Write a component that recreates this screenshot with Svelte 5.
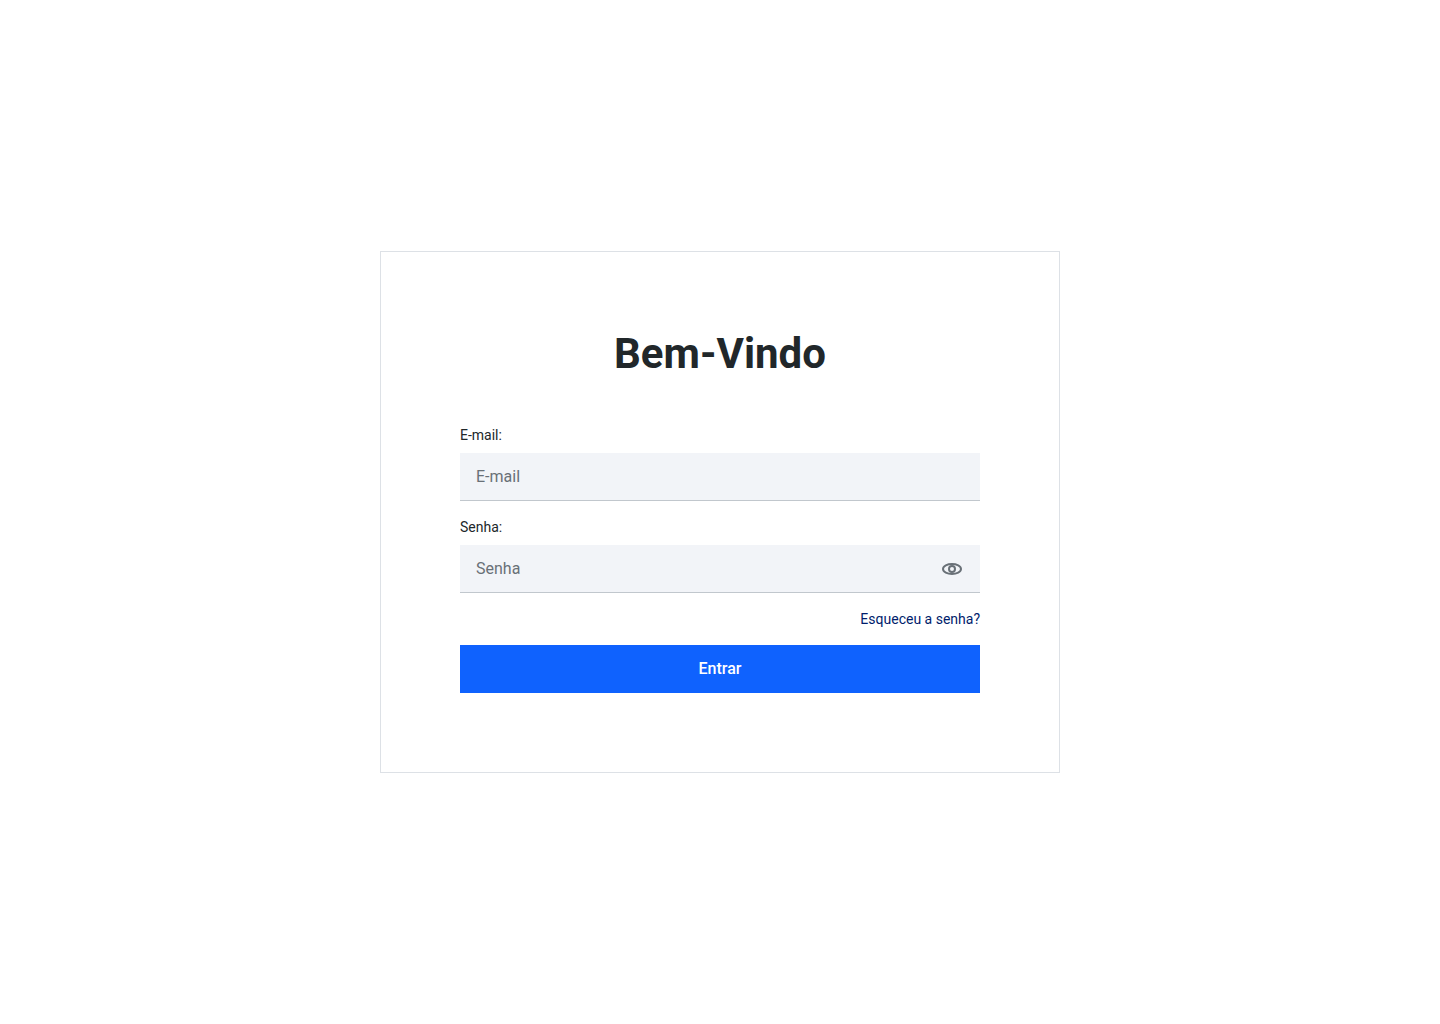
<script>
  let email = $state('');
  let password = $state('');
  let visible = $state(false);
</script>

<main>
  <form class="card" onsubmit={(e) => e.preventDefault()}>
    <h1>Bem-Vindo</h1>
    <div class="fields">
      <div class="field">
        <label for="email">E-mail:</label>
        <div class="control">
          <input id="email" type="email" placeholder="E-mail" bind:value={email} />
        </div>
      </div>
      <div class="field">
        <label for="password">Senha:</label>
        <div class="control">
          <input id="password" type={visible ? 'text' : 'password'} placeholder="Senha" bind:value={password} />
          <button class="toggle" type="button" aria-label="Mostrar senha" onclick={() => (visible = !visible)}>
            <svg viewBox="0 0 24 24" width="24" height="24" fill="none" stroke="currentColor" stroke-width="2">
              <path d="M3 12C3 9 7.500 7 12 7s9 2 9 5-4.500 5-9 5-9-2-9-5Z" />
              <circle cx="12" cy="12" r="3" />
            </svg>
          </button>
        </div>
      </div>
      <a href="#recuperar">Esqueceu a senha?</a>
      <button class="submit" type="submit">Entrar</button>
    </div>
  </form>
</main>

<style>
  :global(body) {
    margin: 0;
    background: #fff;
  }
  main {
    min-height: 100vh;
    display: flex;
    align-items: center;
    justify-content: center;
    font-family: Roboto, sans-serif;
    color: #21272a;
  }
  .card {
    box-sizing: border-box;
    width: 100%;
    max-width: 680px;
    padding: 79px;
    border: 1px solid #dde1e6;
    display: flex;
    flex-direction: column;
    gap: 48px;
  }
  h1 {
    margin: 0;
    font-size: 42px;
    line-height: 46px;
    font-weight: 700;
    text-align: center;
  }
  .fields {
    display: flex;
    flex-direction: column;
    gap: 16px;
  }
  .field {
    display: flex;
    flex-direction: column;
    gap: 8px;
  }
  label,
  a {
    font-size: 14px;
    line-height: 20px;
  }
  .control {
    box-sizing: border-box;
    min-height: 48px;
    padding: 0 16px;
    display: flex;
    align-items: center;
    gap: 8px;
    background: #f2f4f8;
    border-bottom: 1px solid #c1c7cd;
  }
  input {
    flex: 1;
    min-width: 0;
    padding: 0;
    border: 0;
    outline: 0;
    background: transparent;
    color: #21272a;
    font: 16px/24px Roboto, sans-serif;
  }
  input::placeholder {
    color: #697077;
    opacity: 1;
  }
  .toggle {
    display: flex;
    padding: 0;
    border: 0;
    background: none;
    color: #697077;
    cursor: pointer;
  }
  a {
    align-self: flex-end;
    color: #001d6c;
    text-decoration: none;
  }
  .submit {
    min-height: 48px;
    border: 0;
    background: #0f62fe;
    color: #fff;
    font: 500 16px/16px Roboto, sans-serif;
    cursor: pointer;
  }
</style>
